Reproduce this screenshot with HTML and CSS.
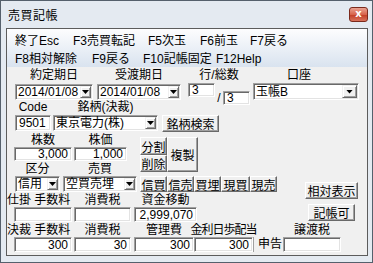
FILE: index.html
```html
<!DOCTYPE html>
<html lang="ja">
<head>
  <meta charset="UTF-8">
  <title>売買記帳</title>
  <link rel="stylesheet" href="styles.css">
</head>
<body>
  <div class="win">
    <div class="titlebar">
      <span class="title">売買記帳</span>
      <span class="close">x</span>
    </div>

    <div class="client">
      <div class="menubar">
        <div class="menu-row">
          <span class="mi m1">終了Esc</span>
          <span class="mi m2">F3売買転記</span>
          <span class="mi m3">F5次玉</span>
          <span class="mi m4">F6前玉</span>
          <span class="mi">F7戻る</span>
        </div>
        <div class="menu-row second">
          <span class="mi m5">F8相対解除</span>
          <span class="mi m6">F9戻る</span>
          <span class="mi m7">F10記帳固定</span>
          <span class="mi">F12Help</span>
        </div>
      </div>

      <div class="form">
        <!-- 日付・行・口座 -->
        <div class="row row-a">
          <div class="grp g-date1">
            <span class="lbl">約定期日</span>
            <div class="edit combo h16 mt1"><span class="val">2014/01/08</span><span class="drop"></span></div>
          </div>
          <div class="grp g-date2">
            <span class="lbl">受渡期日</span>
            <div class="edit combo h16 mt1"><span class="val">2014/01/08</span><span class="drop"></span></div>
          </div>
          <div class="grp g-gyo">
            <span class="lbl">行/総数</span>
            <div class="pair">
              <div class="edit top h14 w27">3</div>
              <span class="slash">/</span>
              <div class="edit top h14 w27 low">3</div>
            </div>
          </div>
          <div class="grp g-koza">
            <span class="lbl shift">口座</span>
            <div class="edit combo h17"><span class="val">玉帳B</span><span class="drop wide"></span></div>
          </div>
        </div>

        <!-- 銘柄 -->
        <div class="row row-b">
          <div class="grp g-code">
            <span class="lbl">Code</span>
            <div class="edit h16">9501</div>
          </div>
          <div class="grp g-meigara">
            <span class="lbl">銘柄(決裁)</span>
            <div class="edit combo h16"><span class="val">東京電力(株)</span><span class="drop"></span></div>
          </div>
          <button class="btn b-search">銘柄検索</button>
        </div>

        <!-- 株数・株価 -->
        <div class="row row-c">
          <div class="grp g-kabusu">
            <span class="lbl l14">株数</span>
            <div class="edit num h14">3,000</div>
          </div>
          <div class="grp g-kabuka">
            <span class="lbl l14">株価</span>
            <div class="edit num h14">1,000</div>
          </div>
          <div class="btn-stack">
            <button class="btn b-split">分割</button>
            <button class="btn b-del">削除</button>
          </div>
          <button class="btn b-copy">複製</button>
        </div>

        <div class="mid">
          <div class="mid-left">
            <!-- 区分・売買 -->
            <div class="row row-d">
              <div class="grp g-kubun">
                <span class="lbl l14">区分</span>
                <div class="edit combo h16"><span class="val">信用</span><span class="drop"></span></div>
              </div>
              <div class="grp g-baibai">
                <span class="lbl l14">売買</span>
                <div class="edit combo h16"><span class="val">空買売埋</span><span class="drop"></span></div>
              </div>
              <div class="trade-btns">
                <button class="btn">信買</button>
                <button class="btn">信売</button>
                <button class="btn">買埋</button>
                <button class="btn w29">現買</button>
                <button class="btn">現売</button>
              </div>
            </div>

            <!-- 仕掛 -->
            <div class="row row-e">
              <div class="grp g-fee">
                <span class="lbl l14 left">仕掛 手数料</span>
                <div class="edit num h15 indent"></div>
              </div>
              <div class="grp g-tax">
                <span class="lbl l14">消費税</span>
                <div class="edit num h15"></div>
              </div>
              <div class="grp g-move">
                <span class="lbl l14">資金移動</span>
                <div class="edit num h15">2,999,070</div>
              </div>
            </div>
          </div>

          <div class="side">
            <button class="btn b-side">相対表示</button>
            <button class="btn b-side narrow">記帳可</button>
          </div>
        </div>

        <!-- 決裁 -->
        <div class="row row-f">
          <div class="grp g-fee">
            <span class="lbl l14 left">決裁 手数料</span>
            <div class="edit num h15 indent">300</div>
          </div>
          <div class="grp g-tax">
            <span class="lbl l14">消費税</span>
            <div class="edit num h15">30</div>
          </div>
          <div class="grp g-kanri">
            <span class="lbl l14">管理費</span>
            <div class="edit num h15">300</div>
          </div>
          <div class="grp g-kinri">
            <span class="lbl l14 tight">金利日歩配当</span>
            <div class="edit num h15">300</div>
          </div>
          <span class="shinkoku">申告</span>
          <div class="grp g-joto">
            <span class="lbl l14">譲渡税</span>
            <div class="edit num h15"></div>
          </div>
        </div>
      </div>
    </div>
  </div>
</body>
</html>
```

FILE: styles.css
```css
/* 売買記帳ダイアログ */
body {
  margin: 0;
  font-family: "Liberation Sans", "Noto Sans CJK JP", sans-serif;
  font-size: 12px;
  color: #000;
}
.win {
  width: 373px;
  height: 263px;
  box-sizing: border-box;
  border: 1px solid #55606c;
  background: #e4eaf1;
  padding: 0 4px 6px 5px;
  display: flex;
  flex-direction: column;
}
.titlebar {
  height: 27px;
  flex: none;
  display: flex;
  align-items: center;
  justify-content: space-between;
  padding-left: 2px;
}
.title {
  font-size: 12px;
  letter-spacing: 0.5px;
}
.close {
  width: 19px;
  height: 15px;
  box-sizing: border-box;
  border: 1px solid #7b2a1c;
  border-radius: 3px;
  background: linear-gradient(#eaa291, #d8644c 50%, #c23c24 51%, #d8725b);
  color: #fff;
  font-family: "DejaVu Sans", sans-serif;
  font-size: 10px;
  font-weight: bold;
  line-height: 12px;
  text-align: center;
}
.client {
  flex: 1;
  border: 1px solid #5c5c5c;
  background: #f0f0f0;
  display: flex;
  flex-direction: column;
}
.menubar {
  height: 38px;
  flex: none;
  box-sizing: border-box;
  padding-top: 3px;
  background: linear-gradient(#fdfdfe, #d9e3ef);
}
.menu-row {
  display: flex;
  height: 18px;
  line-height: 18px;
  padding-left: 8px;
  white-space: nowrap;
}
.menu-row.second {
  height: 17px;
}
.mi {
  flex: none;
}
.m1 { width: 58px; }
.m2 { width: 75px; }
.m3 { width: 52px; }
.m4 { width: 50px; }
.m5 { width: 77px; }
.m6 { width: 51px; }
.m7 { width: 73px; }

/* フォーム */
.row {
  display: flex;
  align-items: flex-start;
  box-sizing: border-box;
}
.row-a { height: 33px; padding-top: 1px; }
.row-b { height: 33px; }
.row-c { height: 29px; }
.row-d { height: 31px; }
.row-e { height: 30px; }
.grp {
  display: flex;
  flex-direction: column;
  flex: none;
}
.lbl {
  height: 15px;
  line-height: 15px;
  text-align: center;
  white-space: nowrap;
}
.lbl.l14 { height: 14px; line-height: 14px; }
.lbl.left { text-align: left; }
.lbl.shift { padding-right: 14px; }
.lbl.tight { letter-spacing: -1px; margin: 0 -6px; }

.edit {
  box-sizing: border-box;
  background: #fff;
  border: 1px solid;
  border-color: #a0a0a0 #fff #fff #a0a0a0;
  box-shadow: inset 1px 1px 0 #696969, inset -1px -1px 0 #e3e3e3;
  padding: 0 3px;
  display: flex;
  align-items: center;
  white-space: nowrap;
  line-height: 1;
}
.edit.num { justify-content: flex-end; }
.edit.top { align-items: flex-start; line-height: 12px; }
.h14 { height: 14px; }
.h15 { height: 15px; }
.h16 { height: 16px; }
.h17 { height: 17px; }
.w27 { width: 27px; }
.mt1 { margin-top: 1px; }

.combo {
  padding: 1px 1px 1px 2px;
  align-items: stretch;
}
.combo .val {
  flex: 1;
  display: flex;
  align-items: center;
  min-width: 0;
}
.drop {
  width: 11px;
  flex: none;
  box-sizing: border-box;
  background: #f0f0f0;
  border: 1px solid;
  border-color: #f0f0f0 #696969 #696969 #f0f0f0;
  box-shadow: inset 1px 1px 0 #fff, inset -1px -1px 0 #a0a0a0;
  display: flex;
  align-items: center;
  justify-content: center;
}
.drop.wide { width: 15px; }
.drop::after {
  content: "";
  width: 7px;
  height: 4px;
  background: #000;
  clip-path: polygon(0 0, 100% 0, 50% 100%);
}

.btn {
  box-sizing: border-box;
  background: #f0f0f0;
  border: 1px solid;
  border-color: #fff #696969 #696969 #fff;
  box-shadow: inset -1px -1px 0 #a0a0a0;
  font: inherit;
  color: #000;
  padding: 0;
  display: flex;
  align-items: center;
  justify-content: center;
  flex: none;
  white-space: nowrap;
}

/* 行A */
.g-date1 { margin-left: 8px; width: 78px; }
.g-date2 { margin-left: 4px; width: 84px; }
.g-gyo { margin-left: 7px; width: 62px; }
.g-koza { margin-left: 3px; width: 106px; }
.pair {
  display: flex;
  align-items: flex-start;
}
.slash {
  width: 8px;
  margin-top: 8px;
  line-height: 14px;
  text-align: center;
}
.low { margin-top: 8px; }

/* 行B */
.g-code { margin-left: 8px; width: 36px; }
.g-meigara { margin-left: 2px; width: 105px; }
.b-search { margin: 15px 0 0 4px; width: 57px; height: 17px; }

/* 行C */
.g-kabusu { margin-left: 7px; width: 58px; }
.g-kabuka { margin-left: 2px; width: 53px; }
.btn-stack {
  display: flex;
  flex-direction: column;
  margin: 4px 0 0 13px;
}
.b-split { width: 27px; height: 18px; }
.b-del { width: 27px; height: 17px; }
.b-copy { width: 31px; height: 35px; margin-top: 4px; }

/* 行D・E */
.mid {
  display: flex;
  align-items: flex-start;
}
.g-kubun { margin-left: 8px; width: 45px; }
.g-baibai { margin-left: 3px; width: 74px; }
.trade-btns {
  display: flex;
  margin: 14px 0 0 3px;
}
.trade-btns .btn { width: 27px; height: 16px; }
.trade-btns .btn.w29 { width: 29px; }
.side {
  margin: 20px 9px 0 auto;
  display: flex;
  flex-direction: column;
  align-items: center;
  gap: 5px;
}
.b-side { width: 53px; height: 17px; }
.b-side.narrow { width: 47px; }

.g-fee { width: 65px; }
.g-fee .indent { margin-left: 7px; }
.g-tax { margin-left: 2px; width: 57px; }
.g-move { margin-left: 3px; width: 63px; }

/* 行F */
.g-kanri { margin-left: 3px; width: 60px; }
.g-kinri { width: 59px; }
.shinkoku {
  margin-top: 14px;
  width: 30px;
  height: 15px;
  box-sizing: border-box;
  border-left: 1px solid #a0a0a0;
  padding-left: 4px;
  line-height: 15px;
  flex: none;
}
.g-joto { width: 58px; }
```
